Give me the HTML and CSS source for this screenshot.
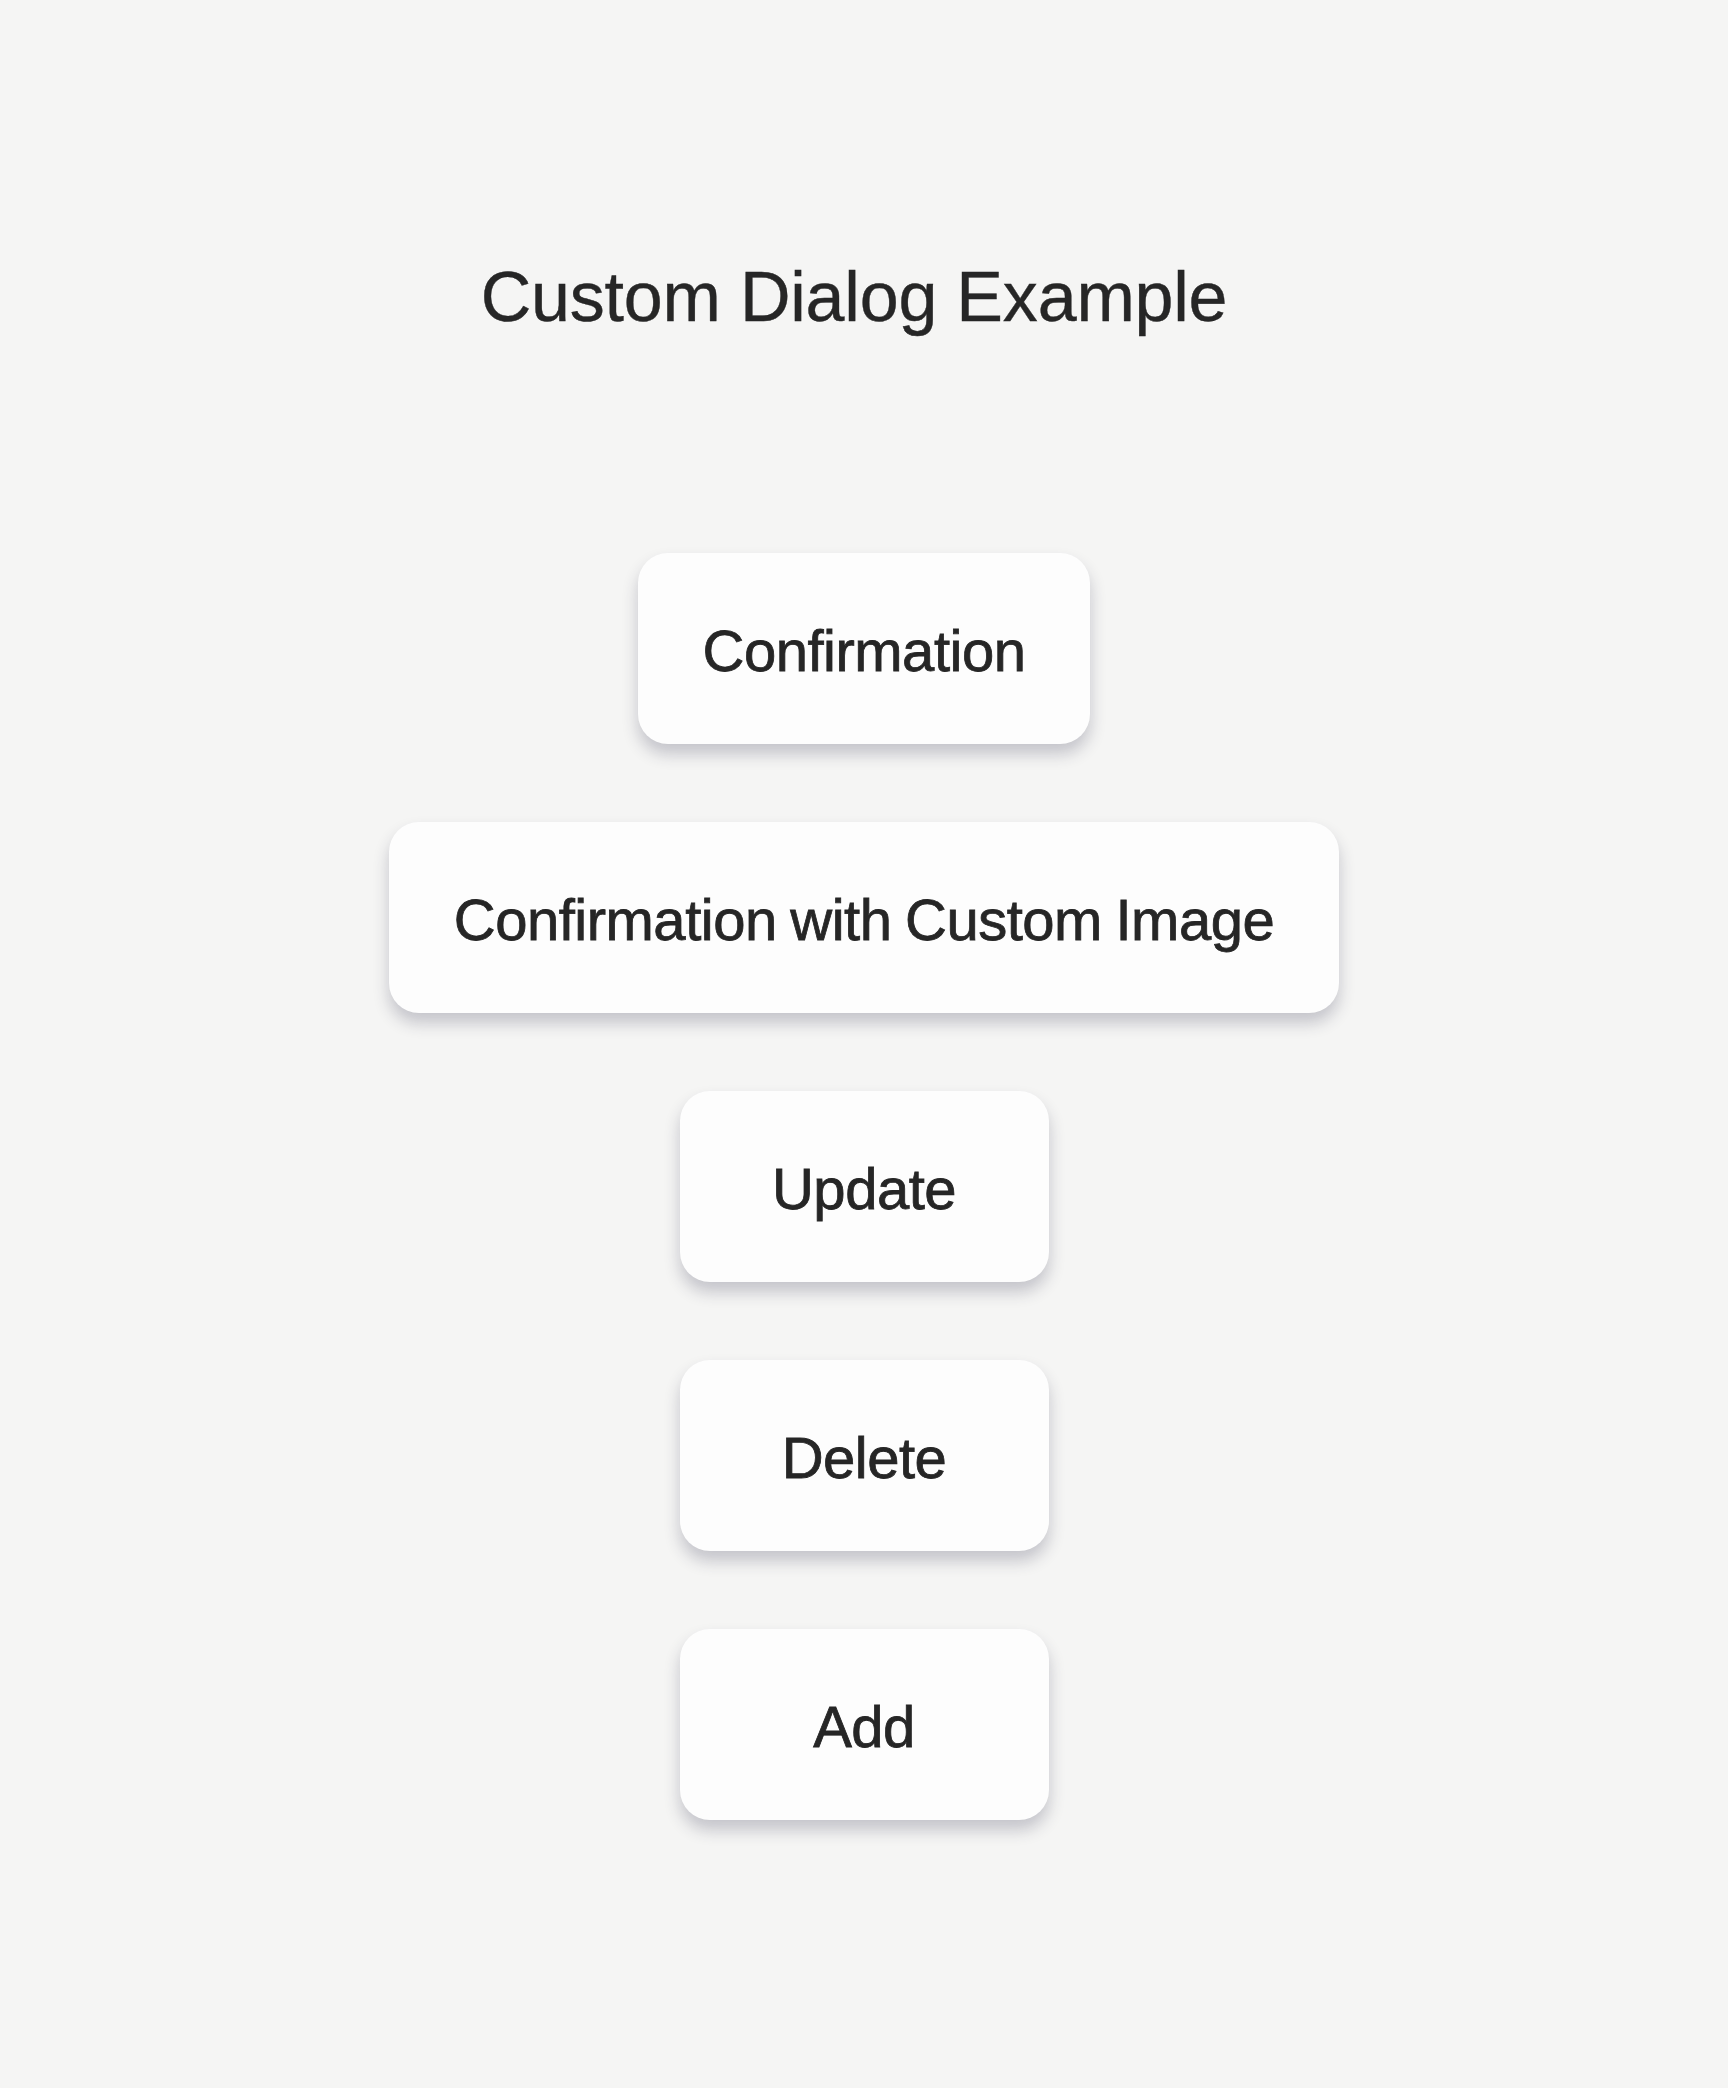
FILE: index.html
```html
<!DOCTYPE html>
<html lang="en">
<head>
    <meta charset="UTF-8">
    <title>Custom Dialog Example</title>
    <link rel="stylesheet" href="styles.css">
</head>
<body>
    <div class="page">
        <h1>Custom Dialog Example</h1>
        <div class="button-list">
            <button type="button" class="dialog-btn">Confirmation</button>
            <button type="button" class="dialog-btn">Confirmation with Custom Image</button>
            <button type="button" class="dialog-btn">Update</button>
            <button type="button" class="dialog-btn">Delete</button>
            <button type="button" class="dialog-btn">Add</button>
        </div>
    </div>
</body>
</html>
```

FILE: styles.css
```css
body {
    font-family: 'Liberation Sans', Arial, Helvetica, sans-serif;
    background-color: #f5f5f4;
    color: #262626;
    margin: 0;
    padding: 0;
}
.page {
    display: flex;
    flex-direction: column;
    align-items: center;
    padding-top: 258px;
    min-height: 2088px;
    box-sizing: border-box;
}
h1 {
    margin: 0 20px 0 0;
    font-size: 70px;
    font-weight: normal;
    line-height: 79px;
    letter-spacing: -0.2px;
    color: #262626;
    -webkit-text-stroke: 0.4px #262626;
}
.button-list {
    display: flex;
    flex-direction: column;
    align-items: center;
    gap: 78px;
    margin-top: 216px;
}
.dialog-btn {
    min-width: 369px;
    padding: 66px 65px 62px;
    font-family: 'Liberation Sans', Arial, Helvetica, sans-serif;
    font-size: 58px;
    line-height: 63px;
    letter-spacing: -0.5px;
    word-spacing: -2px;
    color: #262626;
    background-color: #fdfdfd;
    border: none;
    border-radius: 30px;
    box-shadow: 0 10px 16px rgba(40, 40, 70, 0.24);
    cursor: pointer;
    -webkit-text-stroke: 0.8px #262626;
}
.dialog-btn:hover {
    background-color: #ffffff;
}
```
